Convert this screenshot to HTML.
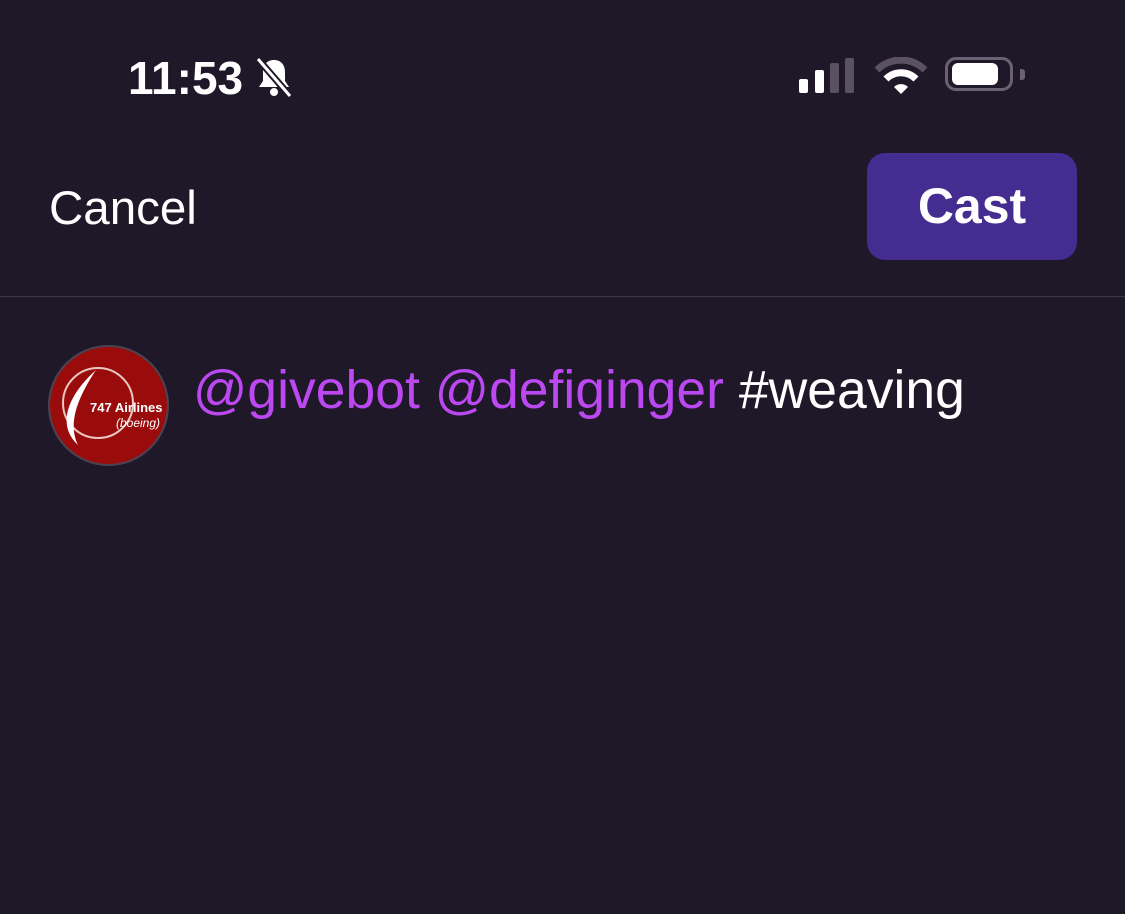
<!DOCTYPE html>
<html><head><style>
body{margin:0;width:1125px;height:914px;background:#1f1829;font-family:"Liberation Sans",sans-serif;overflow:hidden;position:relative;color:#fff}
.a{position:absolute}
</style></head><body>
<div class="a" style="left:128px;top:51px;font-size:46px;font-weight:bold;letter-spacing:0px">11:53</div>
<svg class="a" style="left:254px;top:56px" width="40" height="42" viewBox="0 0 40 42">
<path d="M20 4c-7 0-11 5-11 12v9l-4 6h30l-4-6v-9c0-7-4-12-11-12z" fill="#fff"/>
<circle cx="20" cy="36" r="4" fill="#fff"/>
<line x1="4" y1="3" x2="36" y2="40" stroke="#1f1829" stroke-width="7"/>
<line x1="4" y1="3" x2="36" y2="40" stroke="#fff" stroke-width="3"/>
</svg>
<div class="a" style="left:799px;top:79px;width:9px;height:14px;background:#fff;border-radius:2px"></div>
<div class="a" style="left:815px;top:70px;width:9px;height:23px;background:#fff;border-radius:2px"></div>
<div class="a" style="left:830px;top:63px;width:9px;height:30px;background:#5a5262;border-radius:2px"></div>
<div class="a" style="left:845px;top:58px;width:9px;height:35px;background:#5a5262;border-radius:2px"></div>
<svg class="a" style="left:874px;top:57px" width="54" height="38" viewBox="0 0 54 38">
<path d="M3 13 A34 34 0 0 1 51 13" stroke="#5a5262" stroke-width="7" fill="none"/>
<path d="M12 22 A21 21 0 0 1 42 22" stroke="#fff" stroke-width="7" fill="none"/>
<path d="M20 30 L27 37 L34 30 A10 10 0 0 0 20 30z" fill="#fff"/>
</svg>
<div class="a" style="left:945px;top:57px;width:68px;height:34px;border:3px solid #6a6272;border-radius:11px;box-sizing:border-box"></div>
<div class="a" style="left:952px;top:63px;width:46px;height:22px;background:#fff;border-radius:6px"></div>
<div class="a" style="left:1020px;top:69px;width:5px;height:11px;background:#6a6272;border-radius:0 3px 3px 0"></div>
<div class="a" style="left:49px;top:181px;font-size:47.5px">Cancel</div>
<div class="a" style="left:867px;top:153px;width:210px;height:107px;background:#442c91;border-radius:18px;font-size:50px;font-weight:bold;text-align:center;line-height:107px">Cast</div>
<div class="a" style="left:0;top:296px;width:1125px;height:1px;background:#3e3747"></div>
<svg class="a" style="left:48px;top:345px" width="121" height="121" viewBox="0 0 121 121">
<circle cx="60.5" cy="60.5" r="59.5" fill="#9a0c0c" stroke="#4a4452" stroke-width="2"/>
<circle cx="50" cy="58" r="35" fill="none" stroke="#e8c8c0" stroke-width="2"/>
<path d="M48 25 C20 50 8 80 30 100 C20 80 28 55 48 25z" fill="#fff"/>
<text x="42" y="67" font-size="13" font-weight="bold" fill="#fff" font-family="Liberation Sans">747 Airlines</text>
<text x="68" y="82" font-size="12" font-style="italic" fill="#fff" font-family="Liberation Sans">(boeing)</text>
</svg>
<div class="a" style="left:193px;top:360px;font-size:53.5px;white-space:nowrap"><span style="color:#bb48f0">@givebot @defiginger</span> #weaving</div>
</body></html>
